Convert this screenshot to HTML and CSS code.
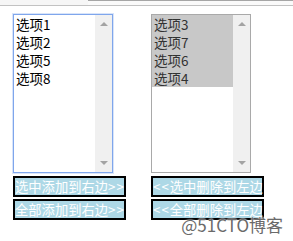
FILE: index.html
```html
<!DOCTYPE html>
<html lang="zh-CN">
<head>
    <meta charset="UTF-8">
    <meta name="viewport" content="width=device-width, initial-scale=1.0">
    <title>列表左右移动</title>
    <link rel="stylesheet" href="styles.css">
</head>
<body>
    <div class="topbar">
        <div class="tab"></div>
    </div>

    <div class="panels">
        <!-- left list -->
        <div class="col">
            <div class="listbox focused">
                <ul class="options">
                    <li>选项1</li>
                    <li>选项2</li>
                    <li>选项5</li>
                    <li>选项8</li>
                </ul>
                <div class="scrollbar">
                    <span class="arrow up"></span>
                    <span class="arrow down"></span>
                </div>
            </div>
            <button class="move">选中添加到右边<span class="chevrons">&gt;&gt;</span></button>
            <button class="move">全部添加到右边<span class="chevrons">&gt;&gt;</span></button>
        </div>

        <!-- right list -->
        <div class="col">
            <div class="listbox">
                <ul class="options">
                    <li class="selected">选项3</li>
                    <li class="selected">选项7</li>
                    <li class="selected">选项6</li>
                    <li class="selected">选项4</li>
                </ul>
                <div class="scrollbar">
                    <span class="arrow up"></span>
                    <span class="arrow down"></span>
                </div>
            </div>
            <button class="move"><span class="chevrons">&lt;&lt;</span>选中删除到左边</button>
            <button class="move"><span class="chevrons">&lt;&lt;</span>全部删除到左边</button>
        </div>
    </div>

    <div class="watermark">@51CTO博客</div>
</body>
</html>
```

FILE: styles.css
```css
/* Page */
body {
    margin: 0;
    font-family: "Noto Sans CJK SC", "Noto Sans", sans-serif;
    background: #fff;
    position: relative;
    height: 241px;
    overflow: hidden;
}

/* Cropped browser strip at the top */
.topbar {
    height: 5px;
    background: #f6f6f6;
    border-bottom: 1px solid #c2c2c2;
}

.topbar .tab {
    margin-left: 88px;
    height: 4px;
    border-top: 1px solid #a6a6a6;
    background: #fafafa;
}

/* Two columns */
.panels {
    display: flex;
    gap: 25px;
    margin-top: 8px;
    padding-left: 13px;
}

.col {
    display: flex;
    flex-direction: column;
    align-items: flex-start;
    width: 113px;
}

/* List boxes */
.listbox {
    display: flex;
    width: 100px;
    height: 159px;
    box-sizing: border-box;
    border: 1px solid #a9a9a9;
    background: #fff;
}

.listbox.focused {
    border-color: #7fa6ec;
    box-shadow: 0 0 0 1px rgba(127, 166, 236, 0.3);
}

.options {
    list-style: none;
    margin: 0;
    padding: 0;
    flex: 1;
    font-size: 13.5px;
    line-height: 18px;
    color: #000;
}

.options li {
    height: 18px;
    padding: 0 2px;
    white-space: nowrap;
}

.options li.selected {
    background: #c8c8c8;
    color: #323232;
}

/* Fake disabled scrollbar */
.scrollbar {
    width: 17px;
    background: #f0f0f0;
    display: flex;
    flex-direction: column;
    justify-content: space-between;
    align-items: center;
    padding: 7px 0;
    box-sizing: border-box;
}

.arrow {
    width: 0;
    height: 0;
    border-left: 4px solid transparent;
    border-right: 4px solid transparent;
}

.arrow.up {
    border-bottom: 4px solid #a3a3a3;
}

.arrow.down {
    border-top: 4px solid #a3a3a3;
}

/* Move buttons */
.move {
    width: 113px;
    height: 21px;
    margin: 3px 0 0;
    padding: 0;
    border: 2px solid #000;
    background: lightblue;
    color: #fff;
    font-family: inherit;
    font-size: 13.3px;
    line-height: 17px;
    text-align: center;
    white-space: nowrap;
    cursor: pointer;
}

.move + .move {
    margin-top: 2px;
}

.chevrons {
    letter-spacing: 1px;
}

/* Watermark */
.watermark {
    position: absolute;
    right: 10px;
    top: 212px;
    font-size: 17px;
    color: #6a6a6a;
    text-shadow: 0 0 2px #fff, 0 0 2px #fff;
}
```
